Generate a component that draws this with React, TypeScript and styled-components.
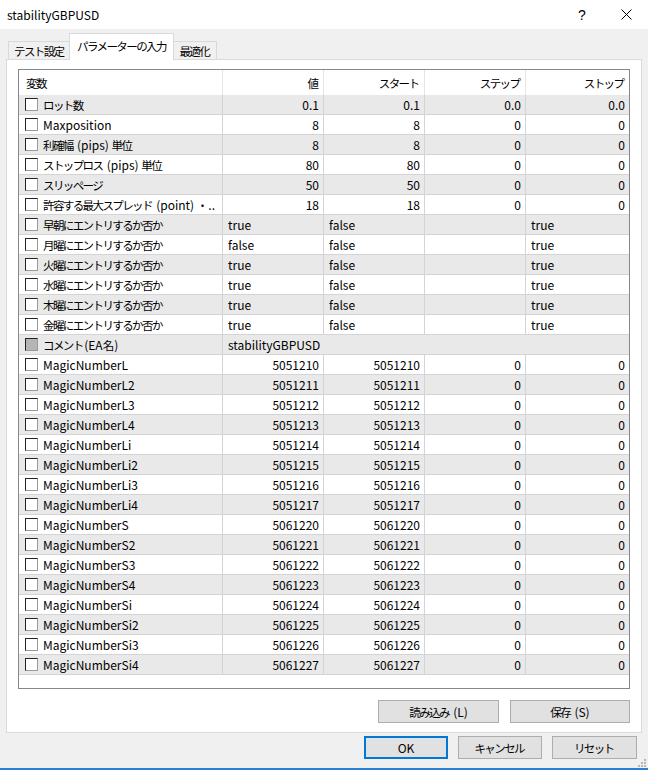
import React from 'react';
import styled, { createGlobalStyle, css } from 'styled-components';

const GlobalStyle = createGlobalStyle`
    html, body {
        margin: 0;
        padding: 0;
        background: #f0f0f0;
    }
    body {
        font-family: "Noto Sans CJK JP", "Noto Sans", sans-serif;
        font-size: 12px;
        color: #000;
    }
`;

// Japanese runs in the original UI font are narrower than Noto CJK, so squeeze them a bit
const Narrow = styled.span`
    font-size: 11.5px;
    letter-spacing: -1.6px;
    padding-right: 1.6px;
`;

const cjk = /([\u3000-\u30ff\u4e00-\u9fff\uff00-\uffef]+)/;

const jp = (text: string) => (
    <span>{text.split(cjk).map((part, i) => (i % 2 === 1 ? <Narrow key={i}>{part}</Narrow> : part))}</span>
);

const Window = styled.div`
    width: 648px;
    height: 770px;
    background: #f0f0f0;
    display: flex;
    flex-direction: column;
    position: relative;
    overflow: hidden;
`;

const TitleBar = styled.div`
    height: 29px;
    background: #fff;
    display: flex;
    align-items: center;
    padding-left: 7px;
    font-size: 12px;
`;

const Title = styled.div`
    flex: 1;
`;

const TitleButton = styled.div`
    width: 44px;
    height: 29px;
    display: flex;
    align-items: center;
    justify-content: center;
    font-family: "Liberation Sans", sans-serif;
    font-size: 14px;
`;

const Content = styled.div`
    flex: 1;
    display: flex;
    flex-direction: column;
    padding: 8px 6px 0 6px;
`;

const TabStrip = styled.div`
    display: flex;
    align-items: flex-end;
    height: 22px;
    padding-left: 2px;
    position: relative;
    z-index: 1;
`;

const Tab = styled.div<{ $active?: boolean }>`
    height: 17px;
    padding: 0 5px;
    display: flex;
    align-items: center;
    border: 1px solid #d9d9d9;
    border-bottom: none;
    background: #f0f0f0;
    font-size: 12px;
    margin-right: -1px;

    ${({ $active }) =>
        $active &&
        css`
            height: 22px;
            background: #fff;
            padding: 0 6px 4px 7px;
            margin: 0 -1px 0 -1px;
            position: relative;
            z-index: 2;
            bottom: -1px;
        `}
`;

const Panel = styled.div`
    height: 674px;
    box-sizing: border-box;
    background: #fff;
    border: 1px solid #d9d9d9;
    padding: 9px 11px 0 11px;
    display: flex;
    flex-direction: column;
`;

const Grid = styled.div`
    height: 620px;
    box-sizing: border-box;
    border: 1px solid #828790;
    background: #fff;
    display: flex;
    flex-direction: column;
`;

const columns = '204px 101px 101px 101px 1fr';

const HeaderRow = styled.div`
    display: grid;
    grid-template-columns: ${columns};
    height: 25px;
`;

const HeaderCell = styled.div<{ $left?: boolean }>`
    display: flex;
    align-items: center;
    justify-content: ${({ $left }) => ($left ? 'flex-start' : 'flex-end')};
    padding: 0 4px 0 7px;
    border-right: 1px solid #e5e5e5;

    &:last-child {
        border-right: none;
    }
`;

const Row = styled.div<{ $shade: boolean }>`
    display: grid;
    grid-template-columns: ${columns};
    height: 20px;
    box-sizing: border-box;
    border-bottom: 1px solid #d4d4d4;
    background: ${({ $shade }) => ($shade ? '#e9e9e9' : '#fff')};
`;

const Cell = styled.div<{ $align?: 'left' | 'right'; $span?: number }>`
    display: flex;
    align-items: center;
    justify-content: ${({ $align }) => ($align === 'left' ? 'flex-start' : 'flex-end')};
    padding: 0 4px 0 5px;
    border-right: 1px solid #d4d4d4;
    white-space: nowrap;
    overflow: hidden;
    ${({ $span }) => $span && css`grid-column: span ${$span};`}

    &:last-child {
        border-right: none;
    }
`;

const NameCell = styled(Cell)`
    justify-content: flex-start;
    padding-left: 6px;
    gap: 5px;
`;

const CheckBox = styled.span<{ $disabled?: boolean }>`
    width: 13px;
    height: 13px;
    flex: none;
    box-sizing: border-box;
    border: 1px solid #222;
    border-right-color: #9a9a9a;
    border-bottom-color: #9a9a9a;
    background: ${({ $disabled }) => ($disabled ? '#b5b5b5' : '#fff')};
`;

const PanelFooter = styled.div`
    display: flex;
    justify-content: flex-end;
    gap: 11px;
    padding-top: 11px;
`;

const Button = styled.button<{ $width: number; $default?: boolean }>`
    width: ${({ $width }) => $width}px;
    height: 23px;
    box-sizing: border-box;
    background: #e1e1e1;
    border: 1px solid #adadad;
    font-family: inherit;
    font-size: 12px;
    color: #000;
    padding: 0;
    display: flex;
    align-items: center;
    justify-content: center;

    ${({ $default }) =>
        $default &&
        css`
            border: 2px solid #0078d7;
        `}
`;

const DialogFooter = styled.div`
    display: flex;
    justify-content: flex-end;
    gap: 10px;
    padding: 3px 5px 0 0;
`;

const BottomEdge = styled.div`
    position: absolute;
    left: 0;
    right: 0;
    bottom: 0;
    height: 2px;
    background: #2b7fd4;
`;

const Grip = styled.svg`
    position: absolute;
    right: 2px;
    bottom: 3px;
`;

type Param = {
    name: string;
    values: string[];
    align?: 'left' | 'right';
    disabled?: boolean;
};

const bool = (v: string) => [v, 'false', '', 'true'];

const params: Param[] = [
    { name: 'ロット数', values: ['0.1', '0.1', '0.0', '0.0'] },
    { name: 'Maxposition', values: ['8', '8', '0', '0'] },
    { name: '利確幅 (pips) 単位', values: ['8', '8', '0', '0'] },
    { name: 'ストップロス (pips) 単位', values: ['80', '80', '0', '0'] },
    { name: 'スリッページ', values: ['50', '50', '0', '0'] },
    { name: '許容する最大スプレッド (point) ・..', values: ['18', '18', '0', '0'] },
    { name: '早朝にエントリするか否か', values: bool('true'), align: 'left' },
    { name: '月曜にエントリするか否か', values: bool('false'), align: 'left' },
    { name: '火曜にエントリするか否か', values: bool('true'), align: 'left' },
    { name: '水曜にエントリするか否か', values: bool('true'), align: 'left' },
    { name: '木曜にエントリするか否か', values: bool('true'), align: 'left' },
    { name: '金曜にエントリするか否か', values: bool('true'), align: 'left' },
    { name: 'コメント(EA名)', values: ['stabilityGBPUSD'], align: 'left', disabled: true },
    ...[
        ['MagicNumberL', '5051210'],
        ['MagicNumberL2', '5051211'],
        ['MagicNumberL3', '5051212'],
        ['MagicNumberL4', '5051213'],
        ['MagicNumberLi', '5051214'],
        ['MagicNumberLi2', '5051215'],
        ['MagicNumberLi3', '5051216'],
        ['MagicNumberLi4', '5051217'],
        ['MagicNumberS', '5061220'],
        ['MagicNumberS2', '5061221'],
        ['MagicNumberS3', '5061222'],
        ['MagicNumberS4', '5061223'],
        ['MagicNumberSi', '5061224'],
        ['MagicNumberSi2', '5061225'],
        ['MagicNumberSi3', '5061226'],
        ['MagicNumberSi4', '5061227'],
    ].map(([name, n]) => ({ name, values: [n, n, '0', '0'] })),
];

const App: React.FC = () => {
    return (
        <Window>
            <GlobalStyle />
            <TitleBar>
                <Title>stabilityGBPUSD</Title>
                <TitleButton>?</TitleButton>
                <TitleButton>
                    <svg width="11" height="11" viewBox="0 0 11 11">
                        <path d="M0.5 0.5 L10.5 10.5 M10.5 0.5 L0.5 10.5" stroke="#000" strokeWidth="1" />
                    </svg>
                </TitleButton>
            </TitleBar>
            <Content>
                <TabStrip>
                    <Tab>{jp('テスト設定')}</Tab>
                    <Tab $active>{jp('パラメーターの入力')}</Tab>
                    <Tab>{jp('最適化')}</Tab>
                </TabStrip>
                <Panel>
                    <Grid>
                        <HeaderRow>
                            <HeaderCell $left>{jp('変数')}</HeaderCell>
                            <HeaderCell>{jp('値')}</HeaderCell>
                            <HeaderCell>{jp('スタート')}</HeaderCell>
                            <HeaderCell>{jp('ステップ')}</HeaderCell>
                            <HeaderCell>{jp('ストップ')}</HeaderCell>
                        </HeaderRow>
                        {params.map((p, i) => (
                            <Row key={p.name} $shade={i % 2 === 0}>
                                <NameCell>
                                    <CheckBox $disabled={p.disabled} />
                                    {jp(p.name)}
                                </NameCell>
                                {p.values.length === 1 ? (
                                    <Cell $align="left" $span={4}>
                                        {p.values[0]}
                                    </Cell>
                                ) : (
                                    p.values.map((v, j) => (
                                        <Cell key={j} $align={p.align}>
                                            {v}
                                        </Cell>
                                    ))
                                )}
                            </Row>
                        ))}
                    </Grid>
                    <PanelFooter>
                        <Button $width={121}>{jp('読み込み (L)')}</Button>
                        <Button $width={120}>{jp('保存 (S)')}</Button>
                    </PanelFooter>
                </Panel>
                <DialogFooter>
                    <Button $width={84} $default>
                        OK
                    </Button>
                    <Button $width={84}>{jp('キャンセル')}</Button>
                    <Button $width={85}>{jp('リセット')}</Button>
                </DialogFooter>
            </Content>
            <Grip width="8" height="8" viewBox="0 0 8 8">
                {[
                    [6, 0],
                    [3, 3],
                    [6, 3],
                    [0, 6],
                    [3, 6],
                    [6, 6],
                ].map(([x, y]) => (
                    <rect key={`${x}-${y}`} x={x} y={y} width="2" height="2" fill="#b8b8b8" />
                ))}
            </Grip>
            <BottomEdge />
        </Window>
    );
};

export default App;
